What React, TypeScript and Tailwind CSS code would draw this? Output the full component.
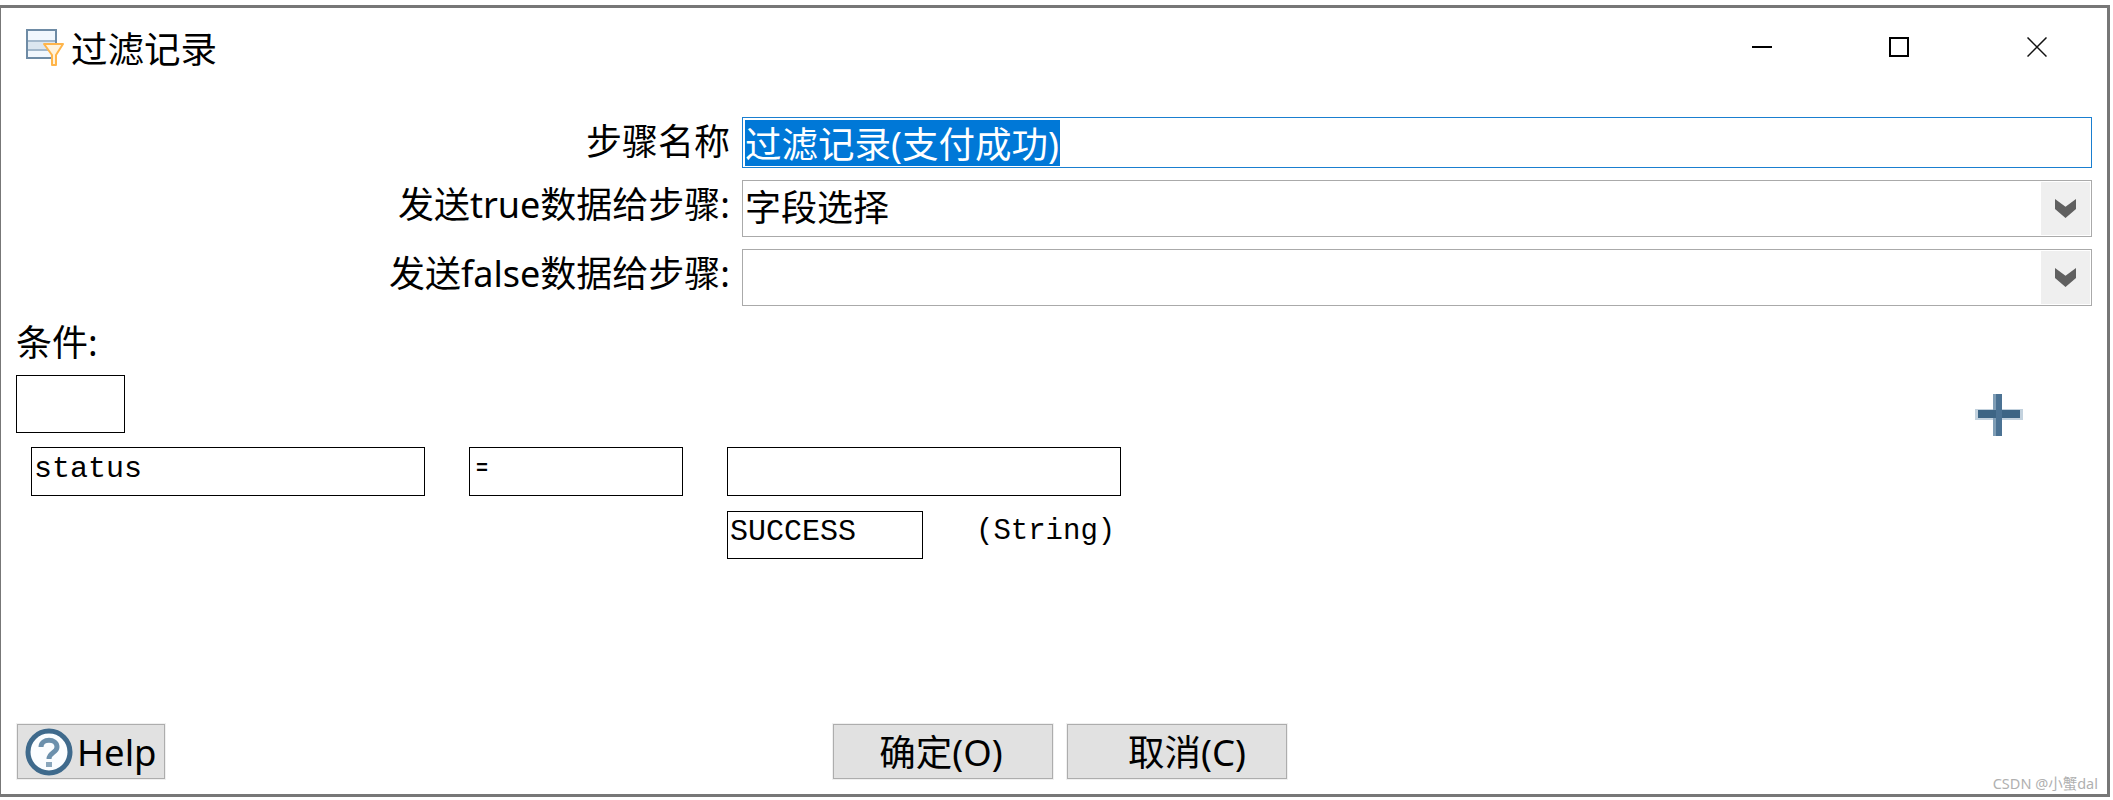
function Chevron() {
  return (
    <svg width="21" height="19" viewBox="0 0 21 19">
      <polygon points="0,0 10.5,7.7 21,0 21,10 10.5,19 0,10" fill="#606060" />
    </svg>
  );
}

function TitleIcon() {
  return (
    <svg width="38" height="37" viewBox="0 0 38 37">
      <rect x="1" y="1" width="29" height="28" fill="#f1f7fd" stroke="#6e8ba5" strokeWidth="2" />
      <rect x="2" y="11" width="27" height="2" fill="#a3b8cb" />
      <rect x="2" y="20" width="27" height="2" fill="#a3b8cb" />
      <rect x="2" y="13" width="27" height="7" fill="#dbe6ef" />
      <path d="M18 15 H37 L30 26 V36 H26 V26 Z" fill="#fff3dc" stroke="#ffb54a" strokeWidth="2" strokeLinejoin="round" />
    </svg>
  );
}

function HelpIcon() {
  return (
    <svg width="48" height="48" viewBox="0 0 48 48">
      <circle cx="24" cy="24" r="21" fill="#fbfdff" stroke="#3f6a8c" strokeWidth="5" />
      <path d="M16 19 C16 10 32 10 32 19 C32 25 24 24 24 31" fill="none" stroke="#6c90ac" strokeWidth="5" />
      <rect x="21" y="34" width="6" height="5" fill="#8aa6bc" />
    </svg>
  );
}

function Plus() {
  return (
    <svg width="48" height="42" viewBox="0 0 48 42">
      <rect x="0" y="15" width="48" height="11" fill="#c3d2de" />
      <rect x="18" y="0" width="9" height="42" fill="#7f9db5" />
      <rect x="3" y="16" width="42" height="8" fill="#3d6585" />
      <rect x="21" y="0" width="6" height="42" fill="#4b7293" />
    </svg>
  );
}

function Combo({ value }: { value?: string }) {
  return (
    <div className="flex h-[57px] w-[1350px] items-center border border-[#aaaaaa] bg-white">
      <span className="flex-1 pb-[2px] pl-[2px] text-[36px] leading-[40px] text-black">{value}</span>
      <div className="mr-px flex h-[53px] w-[49px] items-center justify-center bg-[#efefef]">
        <Chevron />
      </div>
    </div>
  );
}

function Label({ text, className }: { text: string; className?: string }) {
  return <div className={`w-[729px] text-right text-[36px] leading-[40px] text-black ${className ?? ''}`}>{text}</div>;
}

function Button({ children, className }: { children: React.ReactNode; className?: string }) {
  return (
    <div className={`flex h-[55px] items-center border border-[#adadad] bg-[#e1e1e1] text-[36.5px] leading-[40px] text-black outline outline-1 outline-[#f0f0f0] ${className ?? ''}`}>
      {children}
    </div>
  );
}

const mono = "font-['Liberation_Mono',monospace] text-[30px] leading-[34px] text-black";

export default function App() {
  return (
    <div className="h-[800px] w-[2113px] bg-white pt-[5px] pr-[3px] font-['Noto_Sans','Noto_Sans_CJK_SC',sans-serif]">
      <div className="relative flex h-[792px] flex-col border-t-[3px] border-r-[3px] border-b-[3px] border-l border-[#777777] bg-white">
        {/* title bar */}
        <div className="flex h-[78px] items-center pl-[25px]">
          <TitleIcon />
          <span className="ml-[7px] pt-[3px] text-[36.5px] leading-[40px] text-black">过滤记录</span>
          <div className="ml-auto flex items-center pr-[60px]">
            <svg width="20" height="20" viewBox="0 0 20 20" className="mr-[117px]">
              <rect x="0" y="9" width="20" height="2" fill="#000" />
            </svg>
            <svg width="20" height="20" viewBox="0 0 20 20" className="mr-[118px]">
              <rect x="1" y="1" width="18" height="18" fill="none" stroke="#000" strokeWidth="2" />
            </svg>
            <svg width="20" height="20" viewBox="0 0 20 20">
              <path d="M0.5 0.5 L19.5 19.5 M19.5 0.5 L0.5 19.5" stroke="#111" strokeWidth="1.5" />
            </svg>
          </div>
        </div>

        {/* step fields */}
        <div className="mt-[31px] flex flex-col gap-[12px]">
          <div className="flex items-center gap-[12px]">
            <Label text="步骤名称" className="pb-[2px]" />
            <div className="flex h-[51px] w-[1350px] items-center border border-[#1a7fd0] bg-white pl-[2px]">
              <span className="flex h-[46px] items-center bg-[#0078d7] pt-[3px] pr-px text-[36.5px] leading-[40px] text-white">过滤记录(支付成功)</span>
            </div>
          </div>
          <div className="flex items-center gap-[12px]">
            <Label text="发送true数据给步骤:" className="pb-[8px]" />
            <Combo value="字段选择" />
          </div>
          <div className="flex items-center gap-[12px]">
            <Label text="发送false数据给步骤:" className="pb-[8px]" />
            <Combo />
          </div>
        </div>

        {/* condition */}
        <div className="mt-[19px] flex items-start justify-between">
          <div className="flex flex-col">
            <div className="ml-[15px] text-[36px] leading-[36px] text-black">条件:</div>
            <div className="mt-[14px] ml-[15px] h-[58px] w-[109px] border border-black" />
            <div className="mt-[14px] ml-[30px] flex gap-[44px]">
              <div className={`h-[49px] w-[394px] border border-black pt-[4px] pl-[2px] ${mono}`}>status</div>
              <div className="h-[49px] w-[214px] border border-black pt-[9px] pl-[6px] font-['Liberation_Mono',monospace] text-[20px] leading-[24px] font-bold text-black">=</div>
              <div className="h-[49px] w-[394px] border border-black" />
            </div>
            <div className="mt-[15px] ml-[726px] flex items-start">
              <div className={`h-[48px] w-[196px] border border-black pt-[3px] pl-[2px] font-['Liberation_Mono',monospace] text-[30px] leading-[34px] text-black`}>SUCCESS</div>
              <div className="ml-[53px] pt-[4px] font-['Liberation_Mono',monospace] text-[29px] leading-[34px] text-black">(String)</div>
            </div>
          </div>
          <div className="pt-[69px] pr-[84px]">
            <Plus />
          </div>
        </div>

        {/* buttons */}
        <div className="mt-auto flex pb-[15px] pl-[16px]">
          <Button className="w-[148px] pl-[7px]">
            <HelpIcon />
            <span className="ml-[4px]">Help</span>
          </Button>
          <Button className="ml-[668px] w-[220px] justify-center pr-[4px]">确定(O)</Button>
          <Button className="ml-[14px] w-[220px] justify-center pl-[20px]">取消(C)</Button>
        </div>

        <div className="absolute right-[9px] bottom-[3px] text-[14.5px] leading-[16px] text-[#b0b0b0]">CSDN @小蟹dal</div>
      </div>
    </div>
  );
}
